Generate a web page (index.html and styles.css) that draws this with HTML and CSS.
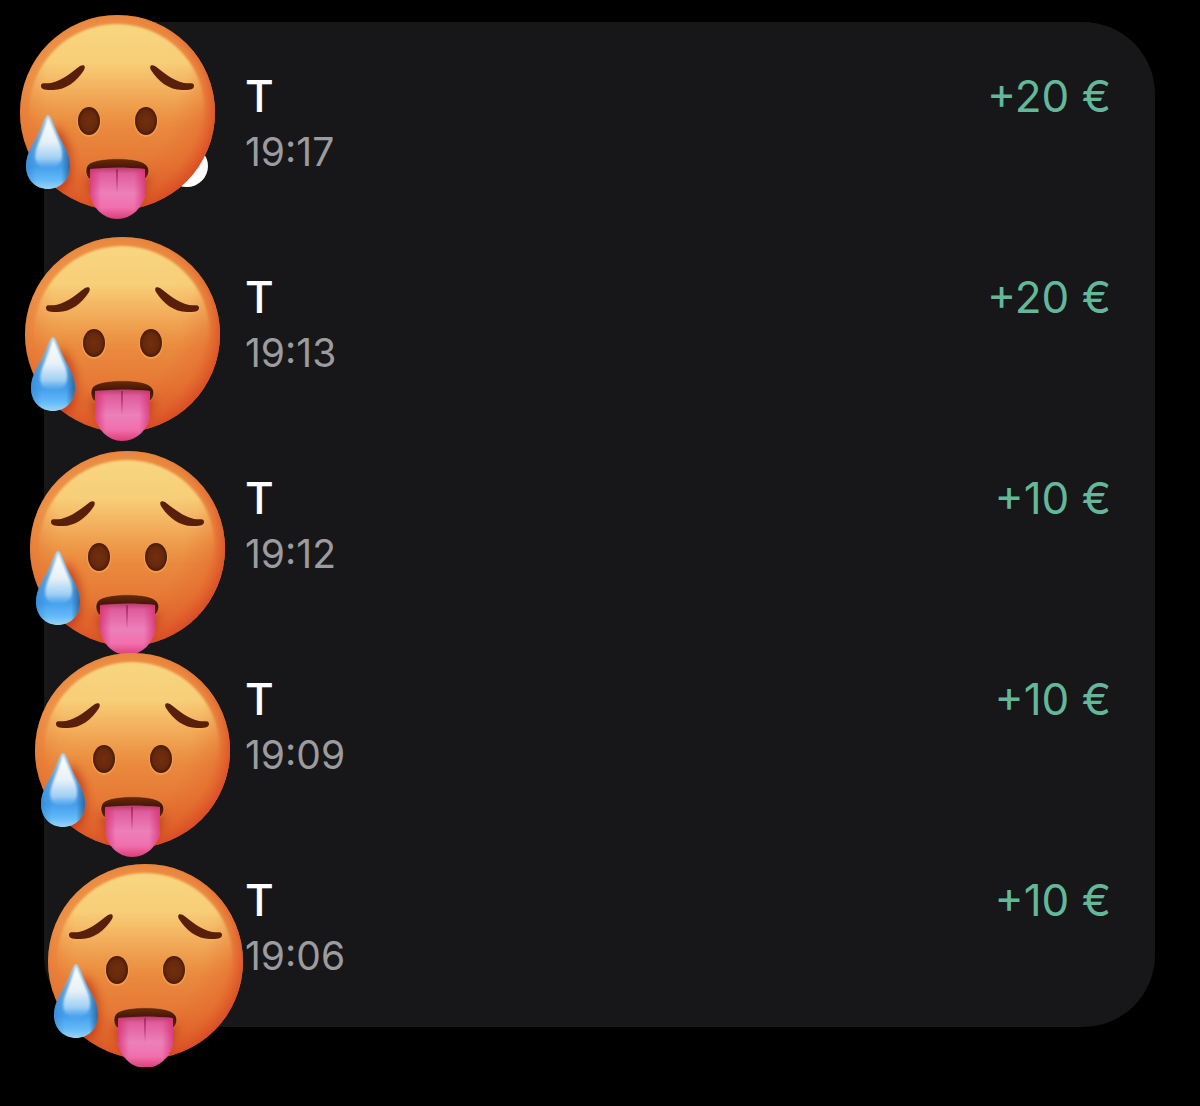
FILE: index.html
```html
<!DOCTYPE html>
<html lang="en">
<head>
  <meta charset="UTF-8" />
  <meta name="viewport" content="width=device-width, initial-scale=1.0"/>
  <title>Transactions</title>
  <link rel="stylesheet" href="styles.css">
</head>
<body>
  <!-- HOT FACE, shared by every row -->
  <svg class="sprite" width="0" height="0" aria-hidden="true">
    <defs>
      <linearGradient id="skin" x1="0" y1="0" x2="0" y2="1">
        <stop offset="0" stop-color="#ee9a48"/>
        <stop offset="0.3" stop-color="#f0a351"/>
        <stop offset="0.5" stop-color="#ec9142"/>
        <stop offset="0.75" stop-color="#e67935"/>
        <stop offset="1" stop-color="#d9552a"/>
      </linearGradient>
      <radialGradient id="rim" cx="0.46" cy="0.46" r="0.55">
        <stop offset="0.6" stop-color="#e2622b" stop-opacity="0"/>
        <stop offset="0.85" stop-color="#e2622b" stop-opacity="0.4"/>
        <stop offset="1" stop-color="#da4c24" stop-opacity="0.9"/>
      </radialGradient>
      <linearGradient id="shine" x1="0" y1="0" x2="0" y2="1">
        <stop offset="0" stop-color="#f8d681"/>
        <stop offset="0.22" stop-color="#f8d07b" stop-opacity="0.95"/>
        <stop offset="0.4" stop-color="#f5bd69" stop-opacity="0.5"/>
        <stop offset="0.6" stop-color="#f0a04c" stop-opacity="0"/>
      </linearGradient>
      <radialGradient id="shineFade" cx="0.5" cy="0.3" r="0.6">
        <stop offset="0.55" stop-color="#fff"/>
        <stop offset="1" stop-color="#fff" stop-opacity="0"/>
      </radialGradient>
      <mask id="shineMask">
        <rect x="-10" y="-20" width="215" height="220" fill="url(#shineFade)"/>
      </mask>
      <radialGradient id="eye">
        <stop offset="0" stop-color="#712f0e"/>
        <stop offset="0.7" stop-color="#67280c"/>
        <stop offset="1" stop-color="#491b09"/>
      </radialGradient>
      <linearGradient id="mouth" x1="0" y1="0" x2="0" y2="1">
        <stop offset="0" stop-color="#6b2a0c"/>
        <stop offset="0.5" stop-color="#421506"/>
        <stop offset="1" stop-color="#6b240c"/>
      </linearGradient>
      <linearGradient id="tongue" x1="0" y1="0" x2="0" y2="1">
        <stop offset="0" stop-color="#b93a6c"/>
        <stop offset="0.12" stop-color="#e05c9b"/>
        <stop offset="0.5" stop-color="#ec80b9"/>
        <stop offset="0.78" stop-color="#f06fac"/>
        <stop offset="1" stop-color="#dc3c78"/>
      </linearGradient>
      <linearGradient id="tongueEdge" x1="0" y1="0" x2="1" y2="0">
        <stop offset="0" stop-color="#d62e70" stop-opacity="0.75"/>
        <stop offset="0.2" stop-color="#d62e70" stop-opacity="0"/>
        <stop offset="0.8" stop-color="#d62e70" stop-opacity="0"/>
        <stop offset="1" stop-color="#d62e70" stop-opacity="0.75"/>
      </linearGradient>
      <linearGradient id="drop" x1="0" y1="0" x2="0" y2="1">
        <stop offset="0" stop-color="#a9c4d6"/>
        <stop offset="0.35" stop-color="#5ba3dc"/>
        <stop offset="0.7" stop-color="#459eec"/>
        <stop offset="0.88" stop-color="#62baf8"/>
        <stop offset="1" stop-color="#9bd4f5"/>
      </linearGradient>
      <linearGradient id="dropEdge" x1="0" y1="0" x2="1" y2="0">
        <stop offset="0" stop-color="#2c80d0" stop-opacity="0.5"/>
        <stop offset="0.25" stop-color="#2c80d0" stop-opacity="0"/>
        <stop offset="0.8" stop-color="#285b8d" stop-opacity="0"/>
        <stop offset="1" stop-color="#285b8d" stop-opacity="0.8"/>
      </linearGradient>
      <linearGradient id="dropShine" x1="0" y1="0" x2="0" y2="1">
        <stop offset="0" stop-color="#ffffff"/>
        <stop offset="0.5" stop-color="#e6f1f8"/>
        <stop offset="0.8" stop-color="#b5dcf7" stop-opacity="0.8"/>
        <stop offset="1" stop-color="#80c5f8" stop-opacity="0"/>
      </linearGradient>
      <filter id="soft1" x="-30%" y="-30%" width="160%" height="160%"><feGaussianBlur stdDeviation="1"/></filter>
      <filter id="soft4" x="-50%" y="-50%" width="200%" height="200%"><feGaussianBlur stdDeviation="4"/></filter>
      <clipPath id="faceClip"><circle cx="97.500" cy="97.500" r="97.500"/></clipPath>
    </defs>
    <symbol id="hot-face" viewBox="0 0 196 205">
      <circle cx="97.500" cy="97.500" r="97.500" fill="url(#skin)"/>
      <circle cx="97.500" cy="97.500" r="97.500" fill="url(#rim)"/>
      <g clip-path="url(#faceClip)">
        <g mask="url(#shineMask)">
          <circle cx="97" cy="97" r="88" fill="url(#shine)" filter="url(#soft1)"/>
        </g>
        <path d="M35 110 Q57 128 50 165 Q43 184 24 171Z" fill="#b92f18" opacity="0.65" filter="url(#soft4)"/>
        <path d="M66 162 Q69 194 97 207 Q126 194 130 162Z" fill="#b93c15" opacity="0.7" filter="url(#soft4)"/>
      </g>
      <!-- brows -->
      <g id="brow">
        <path d="M21 73 C21 69 25 71 31 70 C43 67 53 59 60 53 C64 50 66 53 64 56 C57 68 46 76 33 77 C26 77 21 76 21 73Z" fill="#f9ae59" opacity="0.8"/>
        <path d="M21 71 C21 67 25 69 31 68 C43 65 52 57 60 51 C64 49 66 51 64 55 C57 66 46 75 33 75 C26 75 21 75 21 71Z" fill="#58200b"/>
      </g>
      <use href="#brow" transform="translate(195 0) scale(-1 1)"/>
      <!-- eyes -->
      <ellipse cx="69" cy="107" rx="12" ry="15" fill="#f5a250" opacity="0.8"/>
      <ellipse cx="69" cy="106" rx="11" ry="14" fill="url(#eye)"/>
      <ellipse cx="126" cy="107" rx="12" ry="15" fill="#f5a250" opacity="0.8"/>
      <ellipse cx="126" cy="106" rx="11" ry="14" fill="url(#eye)"/>
      <!-- mouth -->
      <path d="M69 164 C65 160 65 152 69 149 C77 142 118 142 125 149 C130 152 130 160 125 164Z" fill="url(#mouth)" stroke="#f29a48" stroke-width="1" stroke-opacity="0.5"/>
      <path d="M70 154 C88 152 106 152 125 154 L125 179 C123 192 112 204 97 204 C83 204 72 192 70 179Z" fill="url(#tongue)"/>
      <path d="M70 154 C88 152 106 152 125 154 L125 179 C123 192 112 204 97 204 C83 204 72 192 70 179Z" fill="url(#tongueEdge)"/>
      <path d="M96 154 L98 154 L97 178Z" fill="#a32d65"/>
      <!-- sweat -->
      <path id="dropShape" d="M28 100 C31 100 33 108 37 117 C43 130 50 138 50 151 C50 165 40 174 28 174 C16 174 6 165 6 151 C6 138 13 130 19 117 C23 108 25 100 28 100Z" fill="url(#drop)"/>
      <path d="M28 100 C31 100 33 108 37 117 C43 130 50 138 50 151 C50 165 40 174 28 174 C16 174 6 165 6 151 C6 138 13 130 19 117 C23 108 25 100 28 100Z" fill="url(#dropEdge)"/>
      <path d="M28 101 C32 110 36 119 40 129 C45 143 41 153 28 154 C16 153 13 144 17 132 C21 121 25 111 28 101Z" fill="url(#dropShine)" filter="url(#soft1)"/>
    </symbol>
  </svg>

  <main>
    <ul class="card">
      <li class="row">
        <span class="badge"></span>
        <svg class="sticker sticker-1" role="img" aria-label="Hot face"><use href="#hot-face"/></svg>
        <div class="details">
          <div class="name">T</div>
          <time class="time">19:17</time>
        </div>
        <div class="amount">+20 €</div>
      </li>
      <li class="row">
        <svg class="sticker sticker-2" role="img" aria-label="Hot face"><use href="#hot-face"/></svg>
        <div class="details">
          <div class="name">T</div>
          <time class="time">19:13</time>
        </div>
        <div class="amount">+20 €</div>
      </li>
      <li class="row">
        <svg class="sticker sticker-3" role="img" aria-label="Hot face"><use href="#hot-face"/></svg>
        <div class="details">
          <div class="name">T</div>
          <time class="time">19:12</time>
        </div>
        <div class="amount">+10 €</div>
      </li>
      <li class="row">
        <svg class="sticker sticker-4" role="img" aria-label="Hot face"><use href="#hot-face"/></svg>
        <div class="details">
          <div class="name">T</div>
          <time class="time">19:09</time>
        </div>
        <div class="amount">+10 €</div>
      </li>
      <li class="row">
        <svg class="sticker sticker-5" role="img" aria-label="Hot face"><use href="#hot-face"/></svg>
        <div class="details">
          <div class="name">T</div>
          <time class="time">19:06</time>
        </div>
        <div class="amount">+10 €</div>
      </li>
    </ul>
  </main>
</body>
</html>
```

FILE: styles.css
```css
body {
  margin: 0;
  background: #000;
  font-family: Inter, sans-serif;
}

.sprite {
  position: absolute;
}

main {
  padding: 22px 45px 40px 44px;
}

.card {
  margin: 0;
  padding: 0;
  list-style: none;
  background: #171719;
  border-radius: 72px;
}

.row {
  position: relative;
  display: flex;
  justify-content: space-between;
  padding: 46px 44px 43px 201px;
}

.name,
.amount {
  font-size: 44px;
  line-height: 56px;
}

.name {
  color: #fff;
  font-weight: 500;
}

.time {
  display: block;
  color: #9c9c9f;
  font-size: 39px;
  line-height: 56px;
}

.amount {
  color: #62b898;
  white-space: nowrap;
}

/* STICKERS, dropped by hand over the avatars */
.sticker {
  position: absolute;
  width: 196px;
  height: 205px;
}

.sticker-1 { top: -7px; left: -24px; }
.sticker-2 { top: 14px; left: -19px; }
.sticker-3 { top: 27px; left: -14px; }
.sticker-4 { top: 28px; left: -9px; }
.sticker-5 { top: 38px; left: 4px; }

.badge {
  position: absolute;
  top: 123px;
  left: 122px;
  width: 42px;
  height: 42px;
  border-radius: 50%;
  background: #fff;
}
```
